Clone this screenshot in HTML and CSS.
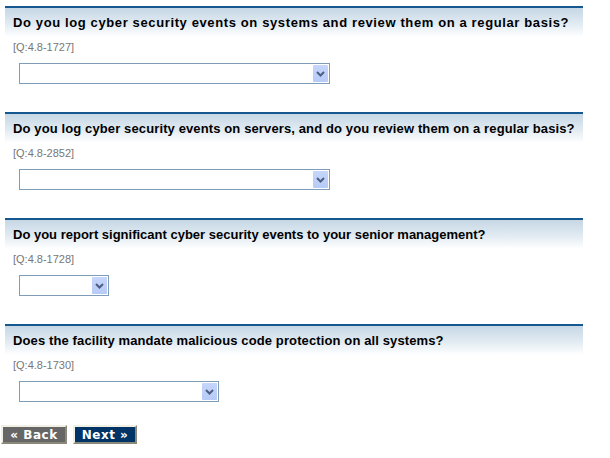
FILE: index.html
```html
<!DOCTYPE html>
<html>
<head>
<meta charset="utf-8">
<link rel="stylesheet" href="styles.css">
</head>
<body>
<div class="page">
  <div class="question">
    <div class="head"><h2 class="wide">Do you log cyber security events on systems and review them on a regular basis?</h2></div>
    <div class="qid">[Q:4.8-1727]</div>
    <div class="select w-long"><span class="arrow"><svg width="9" height="6" viewBox="0 0 9 6"><path d="M1 1 L4.5 4.5 L8 1" fill="none" stroke="#4d5f80" stroke-width="2"/></svg></span></div>
  </div>
  <div class="question">
    <div class="head"><h2>Do you log cyber security events on servers, and do you review them on a regular basis?</h2></div>
    <div class="qid">[Q:4.8-2852]</div>
    <div class="select w-long"><span class="arrow"><svg width="9" height="6" viewBox="0 0 9 6"><path d="M1 1 L4.5 4.5 L8 1" fill="none" stroke="#4d5f80" stroke-width="2"/></svg></span></div>
  </div>
  <div class="question">
    <div class="head"><h2 class="tight">Do you report significant cyber security events to your senior management?</h2></div>
    <div class="qid">[Q:4.8-1728]</div>
    <div class="select w-short"><span class="arrow"><svg width="9" height="6" viewBox="0 0 9 6"><path d="M1 1 L4.5 4.5 L8 1" fill="none" stroke="#4d5f80" stroke-width="2"/></svg></span></div>
  </div>
  <div class="question">
    <div class="head"><h2>Does the facility mandate malicious code protection on all systems?</h2></div>
    <div class="qid">[Q:4.8-1730]</div>
    <div class="select w-mid"><span class="arrow"><svg width="9" height="6" viewBox="0 0 9 6"><path d="M1 1 L4.5 4.5 L8 1" fill="none" stroke="#4d5f80" stroke-width="2"/></svg></span></div>
  </div>
  <div class="nav">
    <button class="btn back">« Back</button>
    <button class="btn next">Next »</button>
  </div>
</div>
</body>
</html>
```
FILE: styles.css
```css
html, body {
  margin: 0;
  padding: 0;
  background: #fff;
}
.page {
  padding-top: 6px;
  font-family: "Liberation Sans", Arial, sans-serif;
}
.question {
  margin-left: 5px;
  width: 578px;
  height: 106px;
}
.head {
  border-top: 2px solid #15588f;
  height: 29px;
  background: linear-gradient(to bottom, #c6d7e5 0%, #e2ebf2 55%, #ffffff 100%);
  display: flex;
  align-items: center;
  padding-left: 8px;
}
.head h2 {
  margin: 0;
  font-size: 13px;
  font-weight: bold;
  color: #000;
  letter-spacing: 0.12px;
  white-space: nowrap;
}
.head h2.wide {
  letter-spacing: 0.62px;
}
.head h2.tight {
  letter-spacing: 0;
}
.qid {
  font-size: 11px;
  color: #777;
  margin: 3px 0 0 8px;
  height: 14px;
  line-height: 14px;
}
.select {
  box-sizing: border-box;
  margin: 9px 0 0 14px;
  height: 21px;
  border: 1px solid #7f9db9;
  background: #fff;
  display: flex;
  justify-content: flex-end;
  padding: 1px;
}
.w-long { width: 311px; }
.w-short { width: 90px; }
.w-mid { width: 200px; }
.arrow {
  width: 15px;
  height: 17px;
  background: linear-gradient(to bottom, #c6d6fb 0%, #b6cbf7 100%);
  border-radius: 1px;
  display: flex;
  align-items: center;
  justify-content: center;
}
.nav {
  display: flex;
  gap: 6px;
  margin-left: 1px;
  margin-top: -5px;
}
.btn {
  box-sizing: border-box;
  margin: 0;
  font-family: Verdana, "DejaVu Sans", sans-serif;
  font-size: 12px;
  font-weight: bold;
  color: #fff;
  height: 19px;
  padding: 0;
  border: 2px solid;
  border-color: #f2f0e4 #8a8878 #8a8878 #f2f0e4;
  letter-spacing: 0.5px;
  line-height: 14px;
}
.back { background: #666666; width: 66px; }
.next { background: #003366; width: 64px; }
```
